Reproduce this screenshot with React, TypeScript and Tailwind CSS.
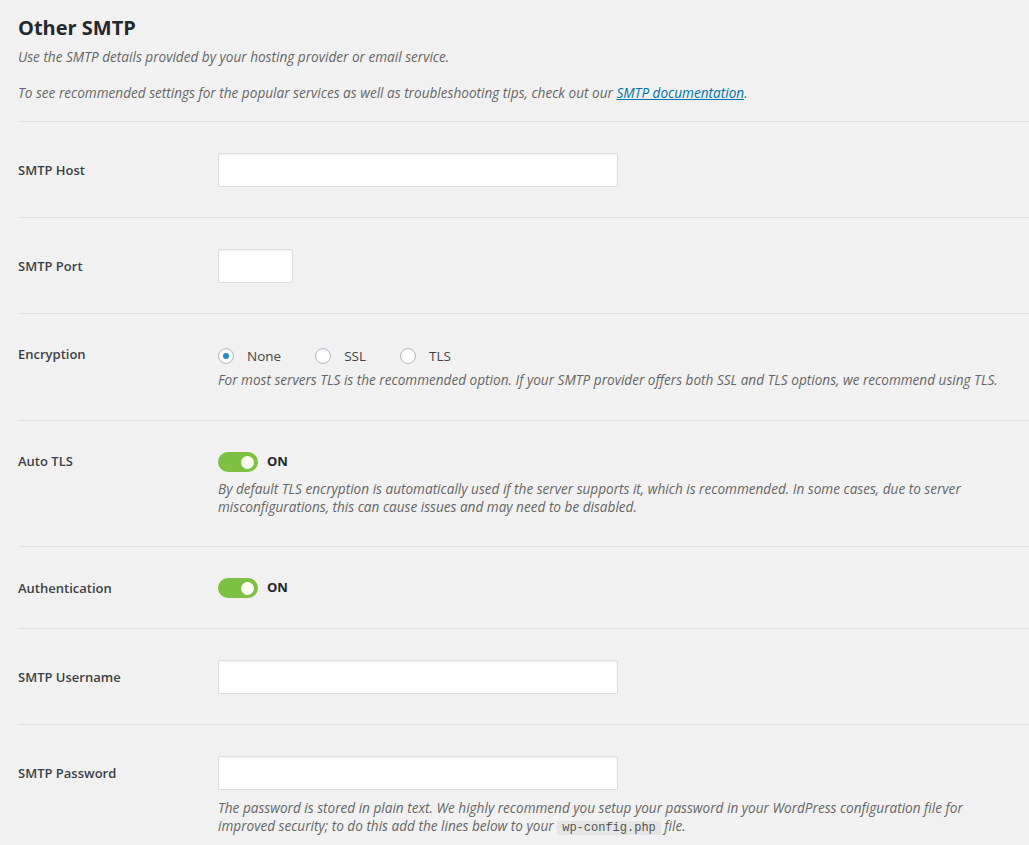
import React from 'react';

const font = { fontFamily: '"Open Sans", "Noto Sans", Arial, sans-serif' };

function Label({ children, lh }: { children: React.ReactNode; lh: string }) {
  return (
    <div className={`w-[200px] shrink-0 text-[13px] font-semibold text-[#3c4146] ${lh}`}>{children}</div>
  );
}

function Desc({ children, className = '' }: { children: React.ReactNode; className?: string }) {
  return <p className={`text-[13.6px] italic text-[#666] leading-[18px] ${className}`}>{children}</p>;
}

function TextInput({ w }: { w: string }) {
  return (
    <input
      type="text"
      className={`${w} h-[34px] bg-white border border-[#ddd] rounded-[2px] shadow-[inset_0_1px_2px_rgba(0,0,0,0.07)] outline-none`}
    />
  );
}

function Radio({ checked, label }: { checked?: boolean; label: string }) {
  return (
    <label className="flex items-center gap-[13px]">
      <span className="w-[16px] h-[16px] rounded-full bg-white border border-[#b4b9be] shadow-[inset_0_1px_2px_rgba(0,0,0,0.1)] flex items-center justify-center">
        {checked && <span className="w-[6px] h-[6px] rounded-full bg-[#1e8cbe]" />}
      </span>
      <span className="text-[13.5px] text-[#444]">{label}</span>
    </label>
  );
}

function Toggle() {
  return (
    <div className="flex items-center gap-[9px] h-[20px]">
      <span className="w-[40px] h-[20px] rounded-full bg-[#7cc142] flex items-center justify-end pr-[4px]">
        <span className="w-[13px] h-[13px] rounded-full bg-[#fdfdf2]" />
      </span>
      <span className="text-[13px] font-bold text-[#23282d]">ON</span>
    </div>
  );
}

function Row({ children }: { children: React.ReactNode }) {
  return <div className="flex border-t border-[#dfdfdf] pt-[31px] pb-[30px]">{children}</div>;
}

export default function App() {
  return (
    <div className="min-h-[845px] bg-[#f1f1f1] pl-[18px] overflow-hidden" style={font}>
      <div className="pt-[15px] pb-[19px]">
        <h2 className="text-[20px] font-bold text-[#23282d] leading-[26px]">Other SMTP</h2>
        <p className="mt-[7px] text-[13.6px] italic text-[#666] leading-[18px]">
          Use the SMTP details provided by your hosting provider or email service.
        </p>
        <p className="mt-[18px] text-[13.6px] italic text-[#666] leading-[18px]">
          To see recommended settings for the popular services as well as troubleshooting tips, check out our{' '}
          <a href="#" className="text-[#0073aa] underline">SMTP documentation</a>.
        </p>
      </div>

      <Row>
        <Label lh="leading-[34px]">SMTP Host</Label>
        <TextInput w="w-[400px]" />
      </Row>

      <Row>
        <Label lh="leading-[34px]">SMTP Port</Label>
        <TextInput w="w-[75px]" />
      </Row>

      <Row>
        <Label lh="leading-[18px]">Encryption</Label>
        <div>
          <div className="flex items-center gap-[34px] h-[22px]">
            <Radio checked label="None" />
            <Radio label="SSL" />
            <Radio label="TLS" />
          </div>
          <Desc className="mt-[3px] leading-[20px]">
            For most servers TLS is the recommended option. If your SMTP provider offers both SSL and TLS options, we recommend using TLS.
          </Desc>
        </div>
      </Row>

      <Row>
        <Label lh="leading-[18px]">Auto TLS</Label>
        <div className="pr-[40px]">
          <Toggle />
          <Desc className="mt-[8px]">
            By default TLS encryption is automatically used if the server supports it, which is recommended. In some cases, due to server misconfigurations, this can cause issues and may need to be disabled.
          </Desc>
        </div>
      </Row>

      <Row>
        <Label lh="leading-[20px]">Authentication</Label>
        <Toggle />
      </Row>

      <Row>
        <Label lh="leading-[34px]">SMTP Username</Label>
        <TextInput w="w-[400px]" />
      </Row>

      <Row>
        <Label lh="leading-[34px]">SMTP Password</Label>
        <div className="pr-[40px]">
          <TextInput w="w-[400px]" />
          <Desc className="mt-[9px]">
            The password is stored in plain text. We highly recommend you setup your password in your WordPress configuration file for improved security; to do this add the lines below to your{' '}
            <code
              className="bg-[#e5e5e5] px-[5px] py-0 not-italic text-[12px] text-[#555]"
              style={{ fontFamily: '"Liberation Mono", monospace' }}
            >
              wp-config.php
            </code>{' '}
            file.
          </Desc>
        </div>
      </Row>
    </div>
  );
}
